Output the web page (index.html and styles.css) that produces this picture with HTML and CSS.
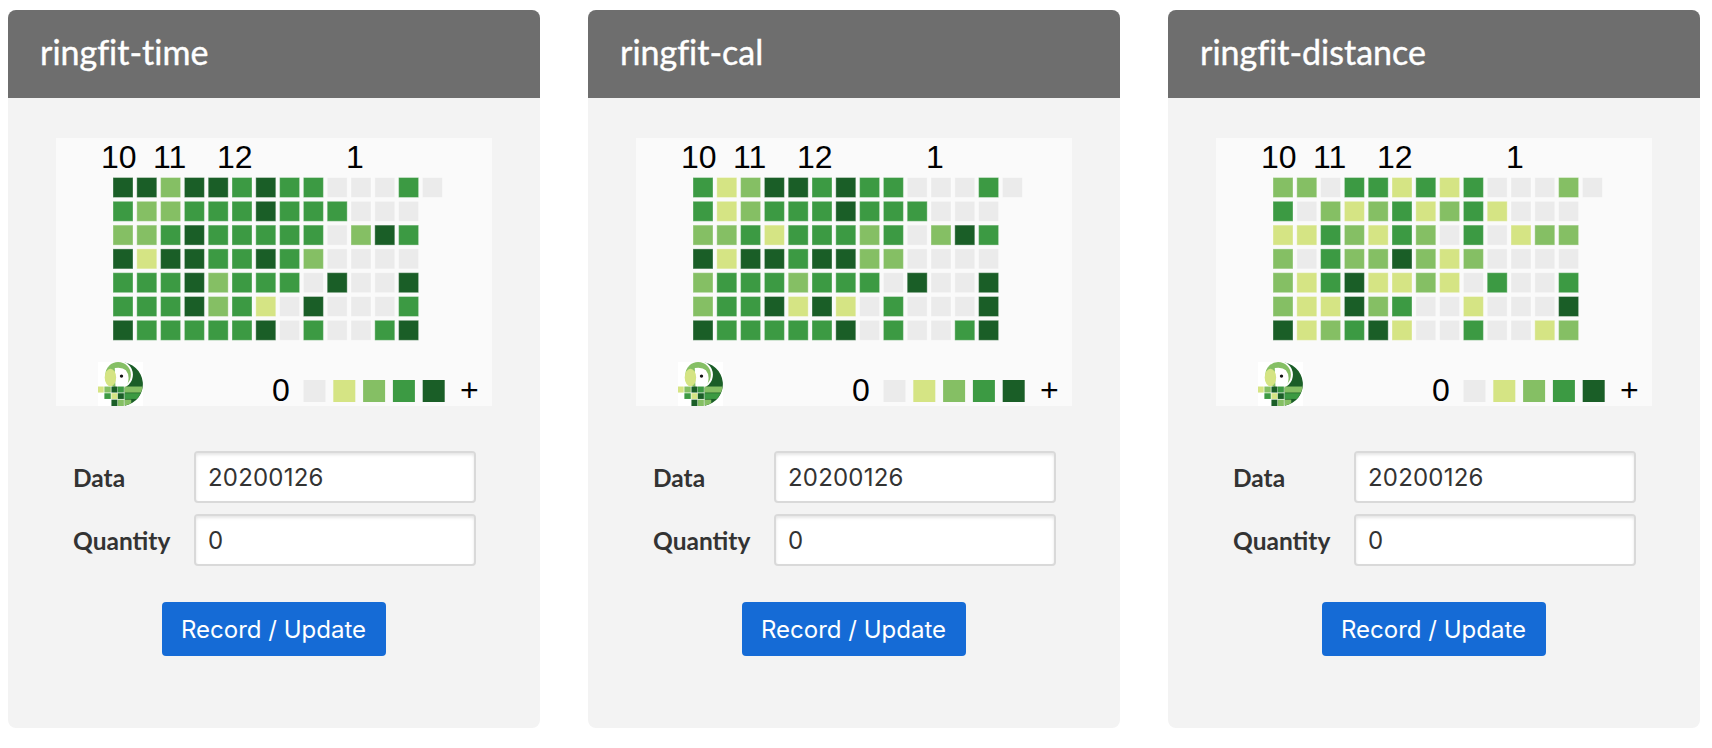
FILE: index.html
```html
<!DOCTYPE html>
<html lang="en">
    <head>
        <meta charset="UTF-8" />
        <title>ringfit</title>
        <link rel="stylesheet" href="styles.css">
    </head>
    <body>
        <!--Parrot logo, shared by the three charts-->
        <svg class="defs" width="0" height="0">
            <clipPath id="parrot-clip">
                <circle cx="68" cy="66" r="65" />
            </clipPath>
            <symbol id="parrot" viewBox="0 0 134 131">
                <rect width="134" height="131" fill="#fff" />
                <path d="M68 1 A65 65 0 0 1 80 130 L79 73 L70 1 Z" fill="#1a5e27" />
                <circle cx="63" cy="38" r="41" fill="#fff" />
                <circle cx="60" cy="38" r="38" fill="#85bf64" />
                <path d="M50 18 Q90 12 91 48 Q91 64 82 75 L52 75 Z" fill="#fff" />
                <ellipse cx="37" cy="46" rx="17" ry="26" fill="#d5e484" />
                <circle cx="70" cy="42" r="5" fill="#111" />
                <g clip-path="url(#parrot-clip)">
                    <rect x="79" y="73" width="55" height="18" fill="#85bf64" />
                    <rect x="79" y="93" width="55" height="17" fill="#3c9a43" />
                    <rect x="79" y="112" width="20" height="19" fill="#85bf64" />
                </g>
                <rect x="0" y="73" width="17" height="18" fill="#d5e484" />
                <rect x="19" y="73" width="19" height="18" fill="#85bf64" />
                <rect x="40" y="73" width="18" height="18" fill="#1a5e27" />
                <rect x="59" y="73" width="18" height="18" fill="#3c9a43" />
                <rect x="19" y="93" width="19" height="17" fill="#3c9a43" />
                <rect x="40" y="93" width="18" height="17" fill="#d5e484" />
                <rect x="59" y="93" width="18" height="17" fill="#1a5e27" />
                <rect x="40" y="112" width="18" height="19" fill="#1a5e27" />
                <rect x="59" y="112" width="18" height="19" fill="#85bf64" />
            </symbol>
        </svg>

        <main id="cards">
            <section class="card">
                <h2 class="card-title">ringfit-time</h2>
                <div class="card-body">
                    <svg class="chart" viewBox="0 0 436 268" data-rows="44244343300030,3223334333000,2234333330243,4144334320000,3334233304004,3334231040003,4333334030034"></svg>
                    <form class="entry">
                        <label class="entry-label" for="date-1">Data</label>
                        <input class="entry-input" id="date-1" type="text" value="20200126">
                        <label class="entry-label" for="qty-1">Quantity</label>
                        <input class="entry-input" id="qty-1" type="text" value="0">
                        <button class="entry-button" type="button">Record / Update</button>
                    </form>
                </div>
            </section>

            <section class="card">
                <h2 class="card-title">ringfit-cal</h2>
                <div class="card-body">
                    <svg class="chart" viewBox="0 0 436 268" data-rows="31244343300030,3123334333000,2231333230243,4144344220000,2333233304004,2334141030004,4333334030034"></svg>
                    <form class="entry">
                        <label class="entry-label" for="date-2">Data</label>
                        <input class="entry-input" id="date-2" type="text" value="20200126">
                        <label class="entry-label" for="qty-2">Quantity</label>
                        <input class="entry-input" id="qty-2" type="text" value="0">
                        <button class="entry-button" type="button">Record / Update</button>
                    </form>
                </div>
            </section>

            <section class="card">
                <h2 class="card-title">ringfit-distance</h2>
                <div class="card-body">
                    <svg class="chart" viewBox="0 0 436 268" data-rows="22033131300020,3021231231000,1132132030122,2032242120000,2134112103003,2114230010004,4123410030012"></svg>
                    <form class="entry">
                        <label class="entry-label" for="date-3">Data</label>
                        <input class="entry-input" id="date-3" type="text" value="20200126">
                        <label class="entry-label" for="qty-3">Quantity</label>
                        <input class="entry-input" id="qty-3" type="text" value="0">
                        <button class="entry-button" type="button">Record / Update</button>
                    </form>
                </div>
            </section>
        </main>
        <script src="chart.js"></script>
    </body>
</html>
```

FILE: styles.css
```css
:root {
    --card: #f3f3f3;
    --header: #6e6e6e;
    --text: #333;
    --blue: #156bd6;
}
body {
    margin: 0;
    background-color: white;
    font-family: Lato, "Noto Sans", sans-serif;
}
.defs {
    position: absolute;
}
#cards {
    display: flex;
    gap: 48px;
    padding: 10px 12px 0 8px;
}
.card {
    flex: 0 0 532px;
    height: 718px;
    display: flex;
    flex-direction: column;
    border-radius: 8px;
    overflow: hidden;
    background-color: var(--card);
}
.card-title {
    box-sizing: border-box;
    height: 88px;
    margin: 0;
    padding: 0 32px 6px;
    display: flex;
    align-items: center;
    background-color: var(--header);
    color: white;
    font-size: 34px;
    font-weight: 400;
    font-variant-ligatures: none;
    -webkit-text-stroke: 0.4px white;
}
.card-body {
    padding: 40px 48px 0;
}
/* Heatmap */
.chart {
    display: block;
    width: 436px;
    height: 268px;
    overflow: visible;
    background-color: #fafafa;
    font-family: "Liberation Sans", Arial, sans-serif;
    font-size: 32px;
    fill: #000;
}
.cell {
    stroke: #fff;
    stroke-opacity: 0.35;
    stroke-width: 1;
}
.l0 { fill: #ebebeb; }
.l1 { fill: #d5e484; }
.l2 { fill: #85bf64; }
.l3 { fill: #3c9a43; }
.l4 { fill: #1a5e27; }
/* Form */
.entry {
    display: grid;
    grid-template-columns: 121px 282px;
    row-gap: 11px;
    align-items: center;
    margin: 45px 0 0 17px;
}
.entry-label {
    color: var(--text);
    font-size: 24.5px;
    font-weight: 700;
}
.entry-input {
    box-sizing: border-box;
    width: 282px;
    height: 52px;
    padding: 0 12px;
    border: 2px solid #d9d9d9;
    border-radius: 4px;
    box-shadow: inset 0 2px 3px rgba(0, 0, 0, 0.1);
    background-color: white;
    color: var(--text);
    font-family: Inter, Roboto, sans-serif;
    font-size: 24px;
    letter-spacing: 0.2px;
}
.entry-button {
    grid-column: 1 / 3;
    justify-self: center;
    width: 224px;
    height: 54px;
    margin: 25px 2px 0 0;
    padding: 0;
    border: none;
    border-radius: 4px;
    background-color: var(--blue);
    color: white;
    font-family: Inter, Roboto, sans-serif;
    font-size: 24px;
}
```

FILE: chart.js
```js
//Draws the month labels, heatmap cells and legend into each chart
const NS = "http://www.w3.org/2000/svg";
const PITCH = 23.8;

function add(svg, tag, attrs, text) {
    const el = document.createElementNS(NS, tag);
    for (const key in attrs) el.setAttribute(key, attrs[key]);
    if (text) el.textContent = text;
    svg.appendChild(el);
    return el;
}

document.querySelectorAll(".chart").forEach((svg) => {
    [["10", 45], ["11", 97], ["12", 161], ["1", 290]].forEach(([label, x]) => {
        add(svg, "text", { x: x, y: 30 }, label);
    });

    svg.dataset.rows.split(",").forEach((row, r) => {
        row.split("").forEach((level, c) => {
            add(svg, "rect", {
                class: "cell l" + level,
                x: 57 + c * PITCH,
                y: 39.5 + r * PITCH,
                width: 20,
                height: 20,
            });
        });
    });

    const logo = add(svg, "use", { x: 42, y: 224, width: 45, height: 44 });
    logo.setAttribute("href", "#parrot");

    add(svg, "text", { x: 216, y: 263 }, "0");
    for (let i = 0; i < 5; i++) {
        add(svg, "rect", { class: "l" + i, x: 247.5 + i * 29.8, y: 242, width: 22, height: 22 });
    }
    add(svg, "text", { x: 404, y: 263 }, "+");
});
```
